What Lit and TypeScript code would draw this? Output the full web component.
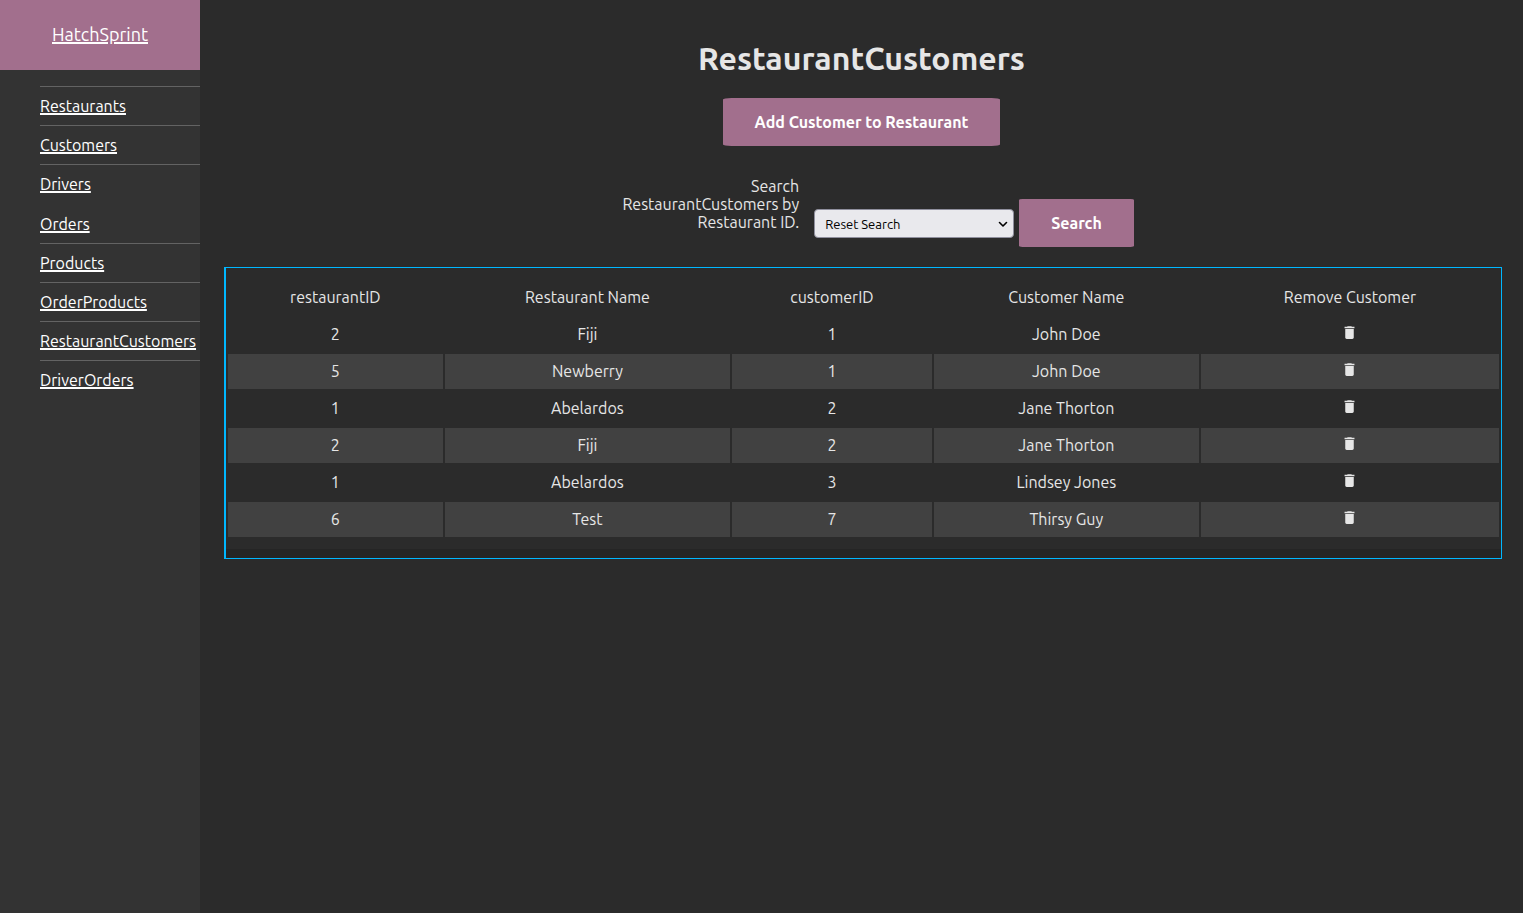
import { LitElement, html, css } from "lit";
import { customElement } from "lit/decorators.js";

const NAV = [
  { label: "Restaurants", divided: true },
  { label: "Customers", divided: true },
  { label: "Drivers", divided: true },
  { label: "Orders", divided: false },
  { label: "Products", divided: true },
  { label: "OrderProducts", divided: true },
  { label: "RestaurantCustomers", divided: true },
  { label: "DriverOrders", divided: true },
];

const ROWS = [
  ["2", "Fiji", "1", "John Doe"],
  ["5", "Newberry", "1", "John Doe"],
  ["1", "Abelardos", "2", "Jane Thorton"],
  ["2", "Fiji", "2", "Jane Thorton"],
  ["1", "Abelardos", "3", "Lindsey Jones"],
  ["6", "Test", "7", "Thirsy Guy"],
];

@customElement("app-root")
export class AppRoot extends LitElement {
  static styles = css`
    :host {
      display: grid;
      grid-template-columns: 200px 1fr;
      min-height: 100vh;
      background: #2b2b2b;
      color: #e6e6e6;
      font: 16px/18px Ubuntu, "Noto Sans", sans-serif;
    }
    * { box-sizing: border-box; }
    .side { background: #333; }
    .brand {
      display: flex;
      align-items: center;
      justify-content: center;
      height: 70px;
      padding-bottom: 2px;
      background: #a26f8d;
      font-size: 18px;
    }
    a { color: #fff; text-underline-offset: 1px; text-decoration-thickness: 2px; }
    .nav { list-style: none; margin: 16px 0; padding: 0 0 0 40px; }
    .nav li { padding: 10px 0; border-top: 2px solid transparent; }
    .nav .divided { border-top: 1px solid #636363; }
    .main { text-align: center; min-width: 0; }
    h1 { margin: 39px 0 21px; font-size: 32px; line-height: 38px; font-weight: 700; }
    .btn {
      height: 48px;
      padding: 0 32px;
      border: 0;
      border-radius: 3%;
      background: #a26f8d;
      color: #fff;
      font: inherit;
      font-weight: 700;
    }
    .search {
      display: flex;
      justify-content: center;
      align-items: flex-end;
      margin: 31px 0 20px;
    }
    .search label { width: 210px; padding-left: 15px; text-align: right; margin: 0 15px 16px 0; }
    .picker { position: relative; width: 200px; margin: 0 5px 9px 0; }
    .picker svg { position: absolute; right: 6px; top: 11px; pointer-events: none; }
    select {
      display: block;
      appearance: none;
      width: 100%;
      height: 29px;
      padding: 0 10px;
      border: 1px solid #8f8f9d;
      border-radius: 4px;
      background: #e9e9ed;
      color: #000;
      font: 13px Ubuntu, "Noto Sans", sans-serif;
    }
    .frame {
      margin: 0 21px 0 24px;
      border: 1px solid #00b7ff;
      border-left-width: 2px;
    }
    .scroll { padding: 10px 0; border-bottom: 9px solid #252525; }
    table { width: 100%; table-layout: fixed; border-spacing: 2px; }
    th, td { height: 35px; padding: 0 0 1px; font-weight: 400; }
    tbody tr:nth-child(even) td { background: #414141; }
    .c1 { width: 17%; }
    .c2 { width: 22.6%; }
    .c3 { width: 15.8%; }
    .c4 { width: 21%; }
    .trash { padding: 0; border: 0; background: none; color: #e6e6e6; }
    .trash svg { display: block; margin: auto; }
  `;

  render() {
    return html`
      <aside class="side">
        <div class="brand"><a href="#">HatchSprint</a></div>
        <nav>
          <ul class="nav">
            ${NAV.map((n) => html`<li class=${n.divided ? "divided" : ""}><a href="#">${n.label}</a></li>`)}
          </ul>
        </nav>
      </aside>
      <main class="main">
        <h1>RestaurantCustomers</h1>
        <button class="btn">Add Customer to Restaurant</button>
        <form class="search">
          <label for="restaurant">Search RestaurantCustomers by Restaurant ID.</label>
          <div class="picker">
            <select id="restaurant"><option>Reset Search</option></select>
            <svg width="10" height="8" viewBox="0 0 10 8" fill="none" stroke="#000" stroke-width="1.600" stroke-linecap="round" stroke-linejoin="round"><path d="M1.500 2.500 5 6l3.500-3.500" /></svg>
          </div>
          <button class="btn" type="button">Search</button>
        </form>
        <div class="frame">
          <div class="scroll">
            <table>
              <colgroup><col class="c1" /><col class="c2" /><col class="c3" /><col class="c4" /><col /></colgroup>
              <thead>
                <tr><th>restaurantID</th><th>Restaurant Name</th><th>customerID</th><th>Customer Name</th><th>Remove Customer</th></tr>
              </thead>
              <tbody>
                ${ROWS.map((r) => html`<tr>
                  ${r.map((c) => html`<td>${c}</td>`)}
                  <td>
                    <button class="trash" aria-label="Remove customer">
                      <svg width="17" height="17" viewBox="0 0 24 24" fill="currentColor"><path d="M6 19c0 1.1.9 2 2 2h8c1.100 0 2-.9 2-2V7H6v12zM19 4h-3.500l-1-1h-5l-1 1H5v2h14V4z" /></svg>
                    </button>
                  </td>
                </tr>`)}
              </tbody>
            </table>
          </div>
        </div>
      </main>
    `;
  }
}
